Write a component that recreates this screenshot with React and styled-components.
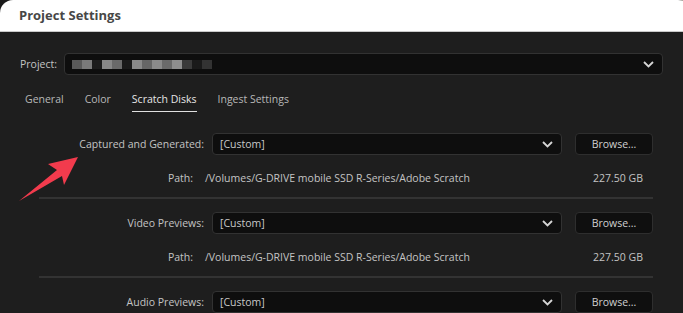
import React from "react";
import styled, { createGlobalStyle } from "styled-components";

const GlobalStyle = createGlobalStyle`
  html, body {
    margin: 0;
    padding: 0;
    background: #1e1e1e;
    overflow: hidden;
  }
  * {
    box-sizing: border-box;
  }
`;

const Stage = styled.div`
  position: relative;
  width: 683px;
  height: 313px;
  overflow: hidden;
  background: linear-gradient(to right, #1a1a1a 50%, #77734f 50%);
  font-family: "Open Sans", "Noto Sans", sans-serif;
`;

const Window = styled.div`
  width: 700px;
  height: 313px;
  display: flex;
  flex-direction: column;
  border-radius: 13px 22px 0 0;
  overflow: hidden;
  background: #1e1e1e;
`;

const TitleBar = styled.div`
  height: 32px;
  flex: none;
  background: #ffffff;
  border-bottom: 1px solid #c9c9c9;
  display: flex;
  align-items: center;
  padding: 0 0 2px 19px;
`;

const Title = styled.h1`
  margin: 0;
  font-size: 13px;
  font-weight: 700;
  color: #474747;
`;

const Body = styled.div`
  width: 683px;
  padding: 21px 20px 0 20px;
  display: flex;
  flex-direction: column;
`;

const ProjectRow = styled.div`
  display: flex;
  align-items: center;
  gap: 7px;
  height: 22px;
`;

const Label = styled.span`
  font-size: 10.5px;
  color: #c4c4c4;
  white-space: nowrap;
`;

const Field = styled.div`
  flex: ${(p) => (p.$grow ? 1 : "none")};
  height: 22px;
  background: #0e0e0e;
  border: 1px solid #323232;
  border-radius: 4px;
  display: flex;
  align-items: center;
  padding: 0 8px 0 7px;
  font-size: 10.5px;
  color: #c8c8c8;
`;

const Blur = styled.div`
  display: flex;
  flex: 1;
`;

const Pixel = styled.span`
  width: 10px;
  height: 9px;
  background: ${(p) => p.$c};
`;

const Chevron = styled.svg`
  margin-left: auto;
  flex: none;
`;

const Tabs = styled.div`
  display: flex;
  gap: 21px;
  padding: 17px 0 0 5px;
  height: 58px;
`;

const Tab = styled.div`
  height: 20px;
  font-size: 10.5px;
  color: ${(p) => (p.$active ? "#e6e6e6" : "#b8b8b8")};
  border-bottom: 1px solid ${(p) => (p.$active ? "#e0e0e0" : "transparent")};
`;

const Section = styled.div`
  margin-left: 19px;
  width: 614px;
  padding-bottom: 8px;
  margin-bottom: 13px;
  border-bottom: 2px solid #333333;
  display: flex;
  flex-direction: column;
  gap: 12px;
`;

const SelectRow = styled.div`
  display: grid;
  grid-template-columns: 165px 350px 1fr;
  column-gap: 8px;
  align-items: center;
  height: 22px;
`;

const RightLabel = styled(Label)`
  text-align: right;
`;

const Browse = styled.button`
  height: 22px;
  margin-left: 5px;
  background: #0f0f0f;
  border: 1px solid #2e2e2e;
  border-radius: 4px;
  color: #cfcfcf;
  font-family: inherit;
  font-size: 10.5px;
  padding: 0;
`;

const PathRow = styled.div`
  display: grid;
  grid-template-columns: 154px 1fr auto;
  column-gap: 12px;
  align-items: center;
  height: 22px;
  padding-right: 10px;
`;

const Arrow = styled.svg`
  position: absolute;
  left: 0;
  top: 0;
  pointer-events: none;
`;

const pixels = [
  "#5a5a5a", "#7a7a7a", "#1c1c1c", "#888888", "#6a6a6a", "#1a1a1a",
  "#898989", "#666666", "#8a8a8a", "#6a6a6a", "#8e8e8e", "#3a3a3a",
  "#1a1a1a", "#333333",
];

const ChevronIcon = () => (
  <Chevron width="11" height="7" viewBox="0 0 11 7">
    <path d="M1 1l4.5 4.5L10 1" fill="none" stroke="#d6d6d6" strokeWidth="1.8" />
  </Chevron>
);

const disks = ["Captured and Generated:", "Video Previews:", "Audio Previews:"];

function DiskSection({ label }) {
  return (
    <Section>
      <SelectRow>
        <RightLabel>{label}</RightLabel>
        <Field>
          [Custom]
          <ChevronIcon />
        </Field>
        <Browse>Browse...</Browse>
      </SelectRow>
      <PathRow>
        <RightLabel>Path:</RightLabel>
        <Label>/Volumes/G-DRIVE mobile SSD R-Series/Adobe Scratch</Label>
        <Label>227.50 GB</Label>
      </PathRow>
    </Section>
  );
}

export default function App() {
  return (
    <>
      <GlobalStyle />
      <Stage>
        <Window>
          <TitleBar>
            <Title>Project Settings</Title>
          </TitleBar>
          <Body>
            <ProjectRow>
              <Label>Project:</Label>
              <Field $grow>
                <Blur>
                  {pixels.map((c, i) => (
                    <Pixel key={i} $c={c} />
                  ))}
                </Blur>
                <ChevronIcon />
              </Field>
            </ProjectRow>
            <Tabs>
              <Tab>General</Tab>
              <Tab>Color</Tab>
              <Tab $active>Scratch Disks</Tab>
              <Tab>Ingest Settings</Tab>
            </Tabs>
            {disks.map((d) => (
              <DiskSection key={d} label={d} />
            ))}
          </Body>
        </Window>
        <Arrow width="100" height="220" viewBox="0 0 100 220">
          <polygon
            points="78,157 48,164 57,170 19,201 62,176 64,185"
            fill="#f23b4d"
          />
        </Arrow>
      </Stage>
    </>
  );
}
